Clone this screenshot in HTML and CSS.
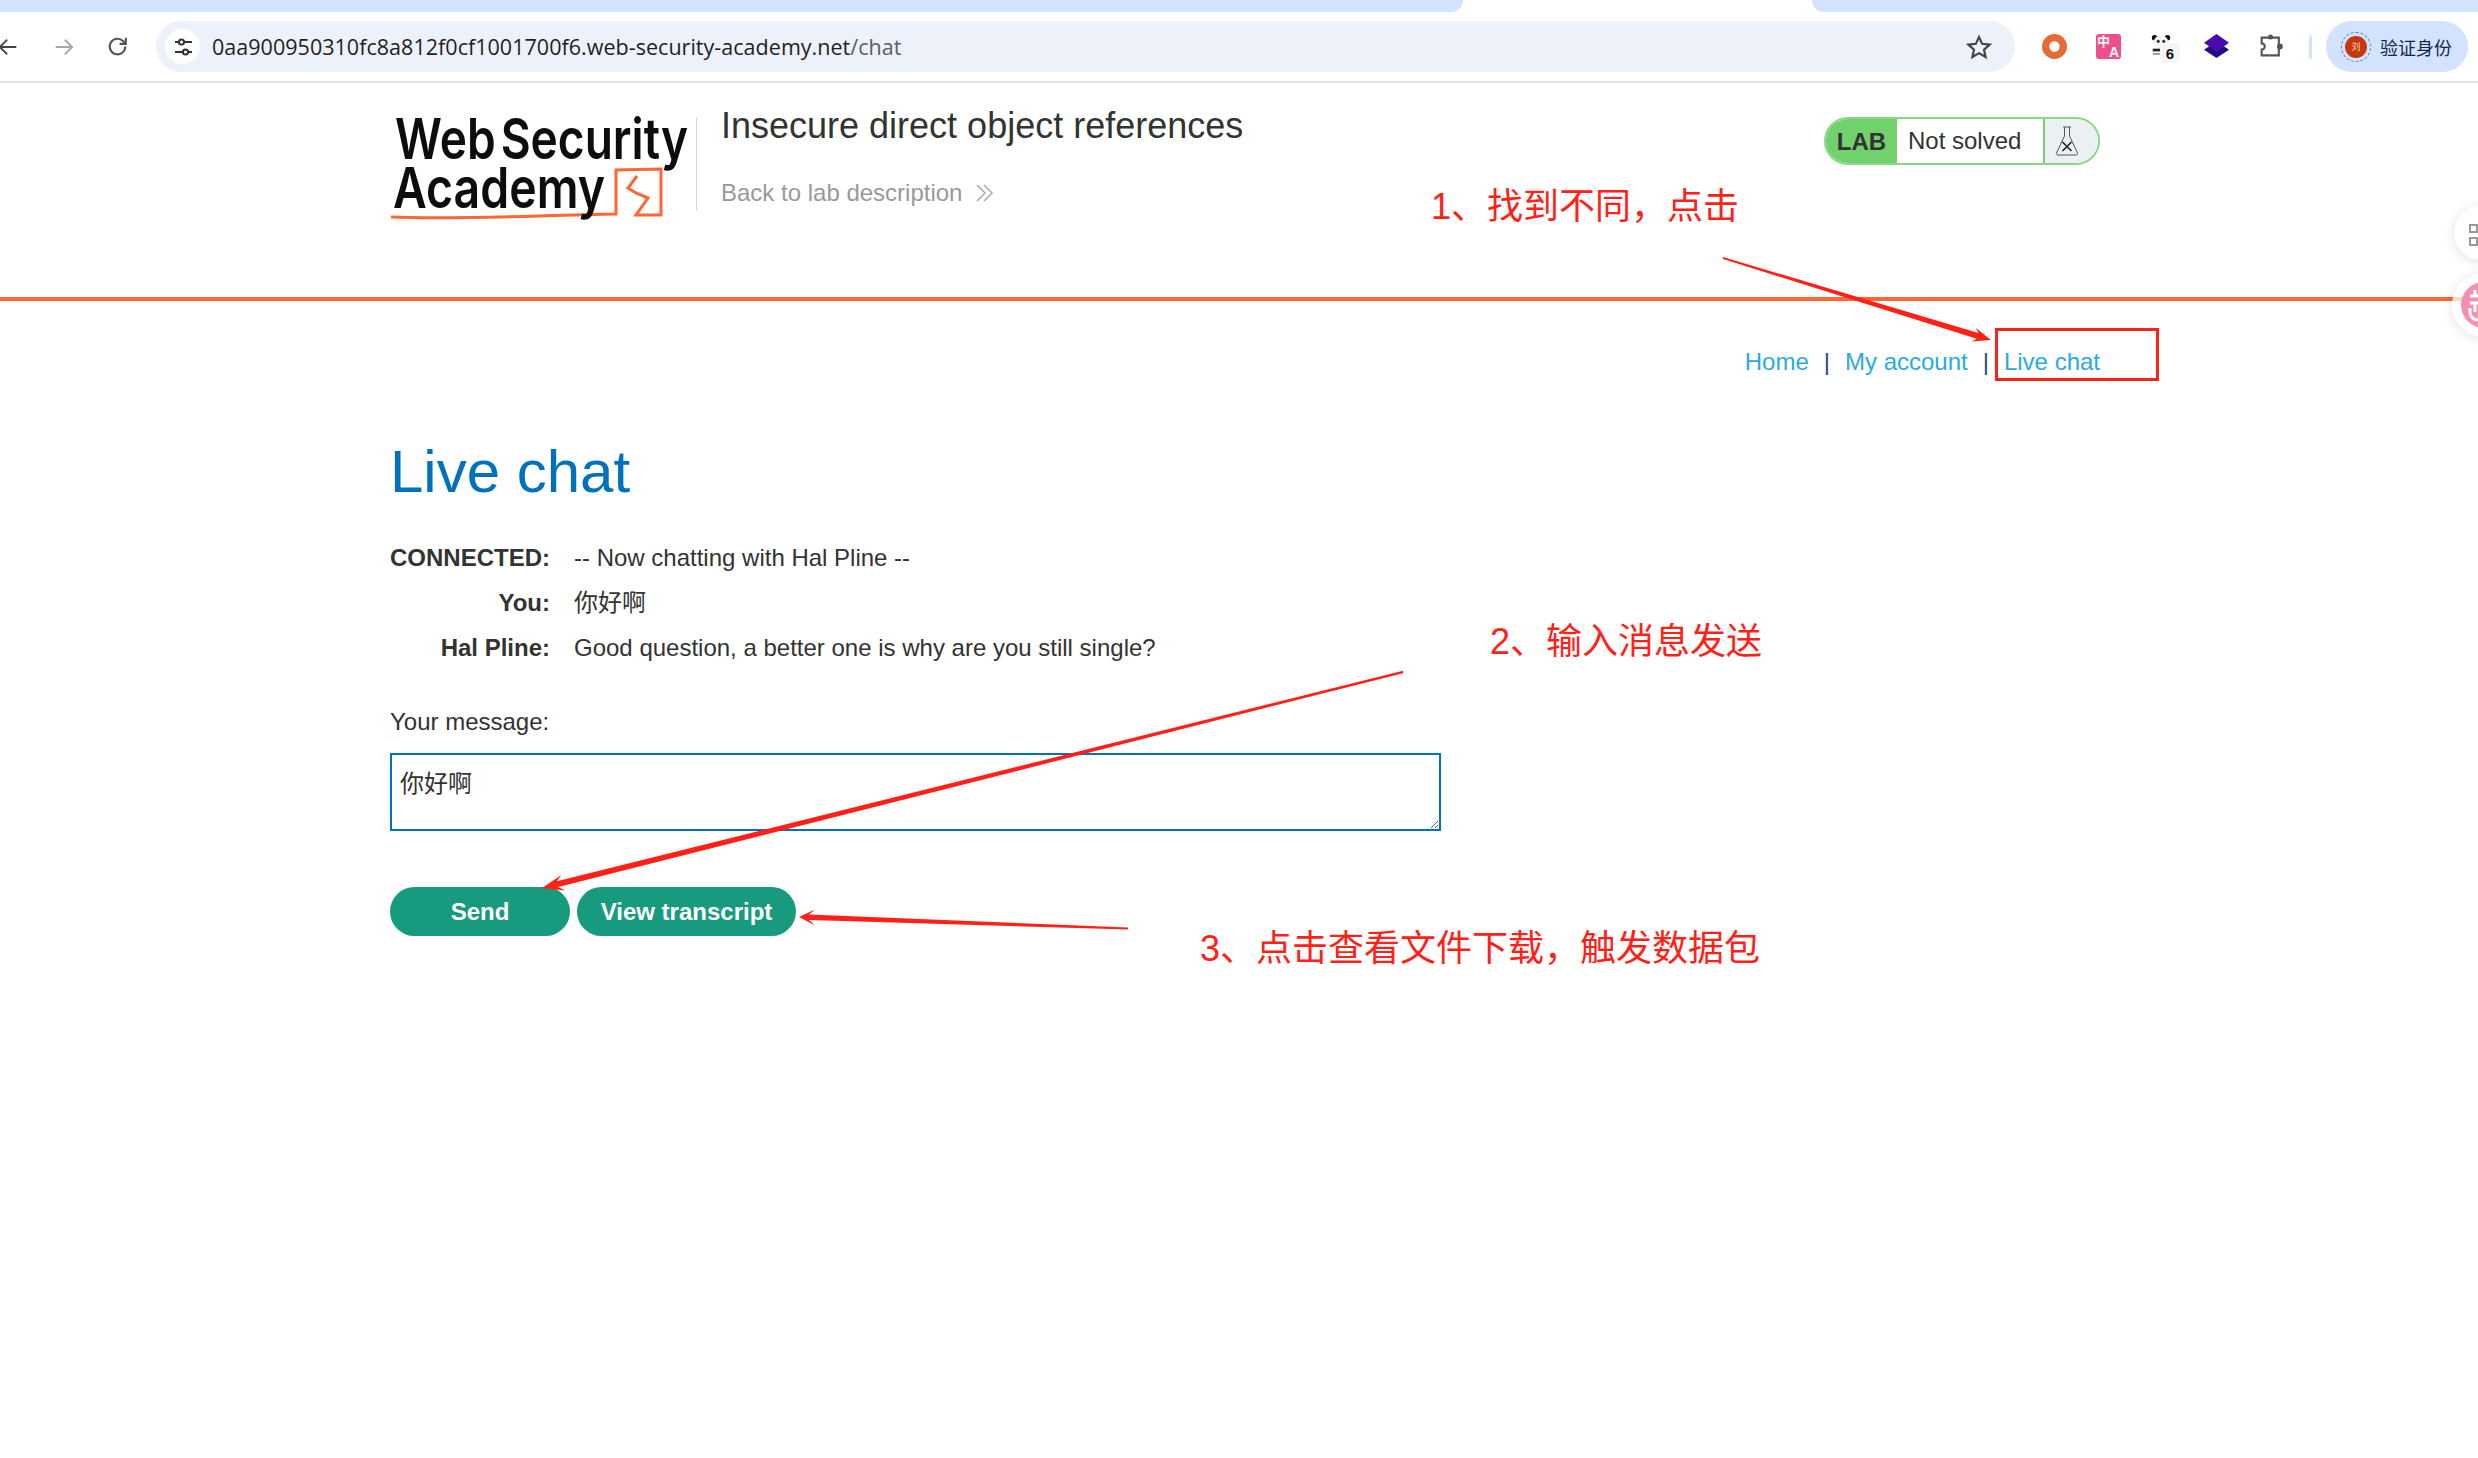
FILE: index.html
```html
<!DOCTYPE html>
<html>
<head>
    <title>Live chat</title>
    <link rel="stylesheet" href="styles.css">
</head>
<body>
    <div class="tab-strip">
        <div class="tab-left"></div>
        <div class="tab-active"></div>
        <div class="tab-right"></div>
    </div>

    <div class="toolbar">
        <div class="nav-icons">
            <svg class="back-icon" viewBox="0 0 24 24"><path d="M20 12H2M10 4l-8 8 8 8"/></svg>
            <svg class="forward-icon" viewBox="0 0 24 24"><path d="M4 12h18M14 4l8 8-8 8"/></svg>
            <svg class="reload-icon" viewBox="0 0 24 24"><path d="M19.500 12a7.500 7.500 0 1 1-2.200-5.300L20 9.500M20 3.500v6h-6"/></svg>
        </div>
        <div class="omnibox">
            <span class="tune-badge">
                <svg viewBox="0 0 24 24"><path d="M4 7h3M14 7h7M4 17h7M18 17h3"/><circle cx="10.500" cy="7" r="2.600"/><circle cx="14.500" cy="17" r="2.600"/></svg>
            </span>
            <span class="url">0aa900950310fc8a812f0cf1001700f6.web-security-academy.net<span class="url-path">/chat</span></span>
            <svg class="star-icon" viewBox="0 0 24 24"><polygon points="12,2.800 14.900,9.100 21.800,9.800 16.600,14.400 18.100,21.200 12,17.700 5.900,21.200 7.400,14.400 2.200,9.800 9.100,9.100"/></svg>
        </div>
        <div class="extensions">
            <svg class="ext" viewBox="0 0 24 24"><circle cx="12" cy="12" r="8.500" fill="none" stroke="#e56a35" stroke-width="7"/></svg>
            <span class="ext translate-ext"><span class="tr-zh">中</span><span class="tr-en">A</span></span>
            <span class="ext panda-ext">
                <svg viewBox="0 0 24 24">
                    <circle cx="5" cy="4" r="3" fill="#111"/><circle cx="19" cy="4" r="3" fill="#111"/>
                    <ellipse cx="12" cy="9" rx="8" ry="7.500" fill="#f4f4f4"/>
                    <circle cx="9" cy="8" r="1.700" fill="#333"/><circle cx="15" cy="8" r="1.700" fill="#333"/>
                    <rect x="3" y="16" width="9" height="3" fill="#222"/><rect x="3" y="21" width="9" height="1.500" fill="#777"/>
                </svg>
                <span class="ext-count">6</span>
            </span>
            <svg class="ext" viewBox="0 0 24 24"><path d="M12 10l12 8-12 8-12-8z" transform="translate(0 -3)" fill="#240a7d"/><path d="M12 0l12 8.500L12 17 0 8.500z" fill="#4a0bad"/></svg>
            <svg class="ext puzzle-ext" viewBox="0 0 24 24">
                <path class="puzzle-line" d="M3.500 3.500h16.500v17H3.500v-5.500a3 3 0 0 0 0-6z"/>
                <circle cx="12" cy="2.800" r="2.400" fill="#555"/><circle cx="21" cy="12" r="2.800" fill="#555"/>
            </svg>
        </div>
        <div class="toolbar-sep"></div>
        <div class="profile-pill">
            <span class="avatar-ring"><span class="avatar">刘</span></span>
            <span class="profile-text">验证身份</span>
        </div>
    </div>

    <header class="site-header">
        <svg class="logo" viewBox="0 0 300 114">
            <path class="logo-line" d="M1 102c70 3 150-2 225-3l0-44 45-1 0 46-25 0 12-17-12-5-8-5 9-12"/>
            <text class="logo-text" x="5" y="44" textLength="293" lengthAdjust="spacingAndGlyphs">Web Security</text>
            <text class="logo-text" x="3" y="93" textLength="212" lengthAdjust="spacingAndGlyphs">Academy</text>
        </svg>
        <div class="logo-sep"></div>
        <div class="lab-title">
            <h2>Insecure direct object references</h2>
            <a class="back-link" href="#">Back to lab description
                <svg viewBox="0 0 20 20"><path d="M3 2l8 8-8 8M10 2l8 8-8 8"/></svg>
            </a>
        </div>
        <div class="lab-status">
            <span class="lab-tag">LAB</span>
            <span class="lab-state">Not solved</span>
            <span class="lab-flask">
                <svg viewBox="0 0 24 30">
                    <path d="M8 1h8M9.500 1v9L1.500 27a1.500 1.500 0 0 0 1.500 2h18a1.500 1.500 0 0 0 1.500-2L14.500 10V1"/>
                    <path class="flask-x" d="M7.500 16l9 9M16.500 16l-9 9"/>
                </svg>
            </span>
        </div>
    </header>

    <main class="content">
        <nav class="top-links">
            <a href="#">Home</a>
            <span>|</span>
            <a href="#">My account</a>
            <span>|</span>
            <a href="#">Live chat</a>
        </nav>

        <h1>Live chat</h1>

        <div class="chat-log">
            <b>CONNECTED:</b><span>-- Now chatting with Hal Pline --</span>
            <b>You:</b><span>你好啊</span>
            <b>Hal Pline:</b><span>Good question, a better one is why are you still single?</span>
        </div>

        <label class="msg-label" for="message">Your message:</label>
        <textarea class="msg-box" id="message">你好啊</textarea>

        <div class="actions">
            <button class="btn btn-send">Send</button>
            <button class="btn btn-view">View transcript</button>
        </div>
    </main>

    <!-- annotations drawn on top of the screenshot -->
    <svg class="notes" viewBox="0 0 2478 1458">
        <rect x="1996.500" y="329.500" width="161" height="50"/>
        <polygon points="1723,257 1978.500,333 1975.900,328 1991,340 1971.800,341.400 1976.700,338.800 1723,259"/>
        <polygon points="1403,670.800 556.800,881.200 561.400,874.900 542,888 565.200,890.500 558.200,887 1403,673.200"/>
        <polygon points="1128,927.500 809,914.500 815,909.500 799,917 815,925.500 809,920 1128,929.500"/>
    </svg>
    <div class="note note-1">1、找到不同，点击</div>
    <div class="note note-2">2、输入消息发送</div>
    <div class="note note-3">3、点击查看文件下载，触发数据包</div>

    <div class="side-btn side-grid"><span></span><span></span></div>
    <div class="side-btn side-pink">
        <span>
            <svg viewBox="0 0 46 46"><path d="M14 8v6M9 14h9M9 21h9M14 21v9M9 26v4a8 8 0 0 0 9 8"/></svg>
        </span>
    </div>
</body>
</html>
```

FILE: styles.css
```css
:root {
    --tab-blue: #d3e3fd;
    --omni-bg: #ecf1fa;
    --orange: #ff6633;
    --text-color: #333332;
    --link-blue: #29abe2;
    --heading-blue: #0071bc;
    --lab-green: #70d16d;
    --note-red: #ff2117;
}

* {
    margin: 0;
    padding: 0;
    box-sizing: border-box;
}

html, body {
    height: 1458px;
    overflow: hidden;
}

body {
    position: relative;
    font-family: 'Liberation Sans', 'Noto Sans CJK SC', sans-serif;
    font-size: 24px;
    color: var(--text-color);
    background: white;
}

a {
    text-decoration: none;
}

/* browser chrome */
.tab-strip {
    display: flex;
    height: 12px;
}

.tab-left {
    width: 1463px;
    background: var(--tab-blue);
    border-bottom-right-radius: 14px;
}

.tab-active {
    width: 349px;
}

.tab-right {
    flex: 1;
    background: var(--tab-blue);
    border-bottom-left-radius: 14px;
}

.toolbar {
    display: flex;
    align-items: center;
    height: 71px;
    border-bottom: 2px solid #e1e1e1;
}

.nav-icons {
    display: flex;
    align-items: center;
    gap: 32px;
    width: 156px;
}

.nav-icons svg {
    width: 22px;
    height: 22px;
    fill: none;
    stroke-width: 2;
}

.back-icon {
    stroke: #444;
    margin-left: -2px;
}

.forward-icon {
    stroke: #a8a8a8;
}

.nav-icons .reload-icon {
    stroke: #555;
    width: 25px;
    height: 25px;
    margin-left: -1px;
}

.omnibox {
    display: flex;
    align-items: center;
    width: 1859px;
    height: 51px;
    padding: 0 10px 0 9px;
    background: var(--omni-bg);
    border-radius: 26px;
}

.tune-badge {
    display: flex;
    align-items: center;
    justify-content: center;
    width: 35px;
    height: 35px;
    background: white;
    border-radius: 50%;
}

.tune-badge svg {
    width: 24px;
    height: 24px;
    fill: none;
    stroke: #333;
    stroke-width: 2;
}

.url {
    flex: 1;
    margin-left: 12px;
    font-family: 'Open Sans', 'Noto Sans', sans-serif;
    font-size: 21.500px;
    letter-spacing: 0.030px;
    color: #1f1f1f;
}

.url-path {
    color: #5a5f66;
}

.star-icon {
    width: 26px;
    height: 26px;
    margin-right: 13px;
    fill: none;
    stroke: #444;
    stroke-width: 2;
}

.extensions {
    display: flex;
    align-items: center;
    gap: 29px;
    margin-left: 27px;
}

.ext {
    position: relative;
    display: block;
    flex: none;
    width: 25px;
    height: 25px;
}

.translate-ext {
    background: #ee4f8c;
    border-radius: 3px;
    font-weight: bold;
    color: white;
}

.tr-zh {
    position: absolute;
    left: 1px;
    top: 1px;
    font-size: 13px;
    line-height: 13px;
}

.tr-en {
    position: absolute;
    right: 2px;
    bottom: 0;
    font-size: 14px;
    line-height: 14px;
}

.panda-ext svg {
    display: block;
    width: 22px;
    height: 22px;
}

.ext-count {
    position: absolute;
    left: 10px;
    top: 9px;
    width: 20px;
    height: 20px;
    background: #f5f5f5;
    border-radius: 5px;
    font-size: 15px;
    font-weight: bold;
    line-height: 21px;
    text-align: center;
    color: #111;
}

.puzzle-line {
    fill: none;
    stroke: #555;
    stroke-width: 2;
}

.toolbar-sep {
    width: 3px;
    height: 24px;
    margin-left: 26px;
    background: var(--tab-blue);
    border-radius: 2px;
}

.profile-pill {
    display: flex;
    align-items: center;
    width: 142px;
    height: 51px;
    margin-left: 14px;
    padding-left: 15px;
    background: var(--tab-blue);
    border-radius: 26px;
}

.avatar-ring {
    display: flex;
    align-items: center;
    justify-content: center;
    width: 30px;
    height: 30px;
    border: 1.500px dashed #5a7fb8;
    border-radius: 50%;
}

.avatar {
    width: 22px;
    height: 22px;
    background: #c6390f;
    border-radius: 50%;
    font-size: 9px;
    line-height: 22px;
    text-align: center;
    color: #f6d7c8;
}

.profile-text {
    margin-left: 9px;
    font-size: 18px;
    color: #14264d;
}

/* lab header */
.site-header {
    display: flex;
    align-items: flex-start;
    height: 218px;
    padding: 0 378px 0 390px;
    border-bottom: 4px solid var(--orange);
}

.logo {
    flex: none;
    width: 300px;
    height: 114px;
    margin-top: 32px;
    overflow: visible;
}

.logo-text {
    font-family: 'Inter', sans-serif;
    font-size: 56px;
    font-weight: 600;
    word-spacing: -8px;
    fill: #0d0d0d;
}

.logo-line {
    fill: none;
    stroke: var(--orange);
    stroke-width: 3;
}

.logo-sep {
    width: 1px;
    height: 94px;
    margin: 34px 24px 0 6px;
    background: #d8d8d8;
}

.lab-title {
    padding-top: 23px;
}

.lab-title h2 {
    font-size: 36px;
    font-weight: normal;
    line-height: 40px;
    color: #333332;
}

.back-link {
    display: flex;
    align-items: center;
    gap: 12px;
    margin-top: 32px;
    font-size: 24px;
    line-height: 30px;
    color: #999;
}

.back-link svg {
    width: 20px;
    height: 20px;
    fill: none;
    stroke: #a8a8a8;
    stroke-width: 1.500;
}

.lab-status {
    display: flex;
    width: 276px;
    height: 48px;
    margin-top: 34px;
    margin-left: auto;
    border: 2px solid #86d984;
    border-radius: 24px;
    overflow: hidden;
}

.lab-tag {
    width: 71px;
    background: var(--lab-green);
    font-weight: bold;
    line-height: 45px;
    text-align: center;
}

.lab-state {
    width: 148px;
    padding-left: 11px;
    border-right: 2px solid var(--lab-green);
    line-height: 44px;
}

.lab-flask {
    flex: 1;
    display: flex;
    align-items: center;
    padding-left: 10px;
    background: #ebf0f2;
}

.lab-flask svg {
    width: 24px;
    height: 30px;
    fill: none;
    stroke: #555;
    stroke-width: 1;
}

.lab-flask .flask-x {
    stroke: #222;
    stroke-width: 1.600;
}

/* page content */
.content {
    padding: 46px 378px 0 390px;
}

.top-links {
    display: flex;
    justify-content: flex-end;
    gap: 15px;
    line-height: 30px;
}

.top-links a {
    color: var(--link-blue);
}

.top-links span {
    color: #2b4a80;
}

h1 {
    margin-top: 60px;
    font-size: 60px;
    font-weight: normal;
    line-height: 70px;
    color: var(--heading-blue);
}

.chat-log {
    display: grid;
    grid-template-columns: 160px 1fr;
    column-gap: 24px;
    margin-top: 28px;
    line-height: 45px;
}

.chat-log b {
    text-align: right;
}

.msg-label {
    display: block;
    margin-top: 37px;
    line-height: 30px;
}

.msg-box {
    display: block;
    width: 1051px;
    height: 78px;
    margin-top: 16px;
    padding: 14px 8px;
    border: 2px solid var(--heading-blue);
    border-radius: 0;
    outline: none;
    font-family: 'Liberation Sans', 'Noto Sans CJK SC', sans-serif;
    font-size: 24px;
    line-height: 30px;
    color: var(--text-color);
}

.actions {
    display: flex;
    gap: 7px;
    margin-top: 56px;
}

.btn {
    height: 49px;
    border: none;
    border-radius: 25px;
    background: #189a7e;
    font-family: 'Liberation Sans', sans-serif;
    font-size: 24px;
    font-weight: bold;
    color: white;
}

.btn-send {
    width: 180px;
}

.btn-view {
    width: 219px;
}

/* red annotations */
.notes {
    position: absolute;
    left: 0;
    top: 0;
    width: 2478px;
    height: 1458px;
}

.notes polygon {
    fill: var(--note-red);
}

.notes rect {
    fill: none;
    stroke: var(--note-red);
    stroke-width: 3;
}

.note {
    position: absolute;
    font-size: 36px;
    line-height: 50px;
    white-space: nowrap;
    color: var(--note-red);
}

.note-1 {
    left: 1431px;
    top: 182px;
}

.note-2 {
    left: 1490px;
    top: 617px;
}

.note-3 {
    left: 1200px;
    top: 924px;
}

/* floating buttons cut off by the window edge */
.side-btn {
    position: absolute;
    width: 54px;
    height: 54px;
    background: white;
    border-radius: 50%;
    box-shadow: 0 2px 12px rgba(0, 0, 0, 0.12);
}

.side-grid {
    left: 2454px;
    top: 206px;
}

.side-grid span {
    display: block;
    width: 9px;
    height: 9px;
    margin: 0 0 4px 15px;
    border: 2px solid #999;
}

.side-grid span:first-child {
    margin-top: 18px;
}

.side-pink {
    left: 2452px;
    top: 273px;
    width: 64px;
    height: 64px;
    background: rgba(255, 255, 255, 0.75);
}

.side-pink span {
    display: block;
    width: 46px;
    height: 46px;
    margin: 9px 0 0 9px;
    background: #f291b0;
    border-radius: 50%;
}

.side-pink svg {
    width: 46px;
    height: 46px;
    fill: none;
    stroke: white;
    stroke-width: 3;
    overflow: hidden;
}
```
